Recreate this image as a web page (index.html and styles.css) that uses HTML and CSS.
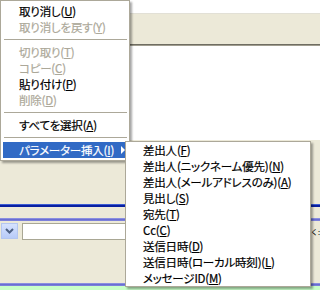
FILE: index.html
```html
<!DOCTYPE html>
<html lang="ja">
<head>
<meta charset="utf-8">
<link rel="stylesheet" href="styles.css">
</head>
<body>
<div class="window">
  <div class="top-white"></div>
  <div class="bar-hi"></div>
  <div class="bar"></div>
  <div class="bar-dark"></div>
  <div class="bar-gray"></div>
  <div class="white-mid"></div>
  <div class="beige-a"></div>
  <div class="blue-line"></div>
  <div class="beige-b"></div>
  <div class="lav-line"></div>
  <div class="tool-row">
    <div class="combo-btn">
      <svg width="9" height="6" viewBox="0 0 9 6"><path d="M1 1 L4.5 4.5 L8 1" fill="none" stroke="#4d6185" stroke-width="2"/></svg>
    </div>
    <div class="field"></div>
    <span class="field-label">く:</span>
  </div>
  <div class="beige-c"></div>
  <div class="lav-line"></div>
  <div class="green"></div>
</div>

<div class="menu main-menu">
  <div class="item">取り消し(<u>U</u>)</div>
  <div class="item disabled">取り消しを戻す(<u>Y</u>)</div>
  <div class="sep"></div>
  <div class="item disabled">切り取り(<u>T</u>)</div>
  <div class="item disabled">コピー(<u>C</u>)</div>
  <div class="item">貼り付け(<u>P</u>)</div>
  <div class="item disabled">削除(<u>D</u>)</div>
  <div class="sep"></div>
  <div class="item">すべてを選択(<u>A</u>)</div>
  <div class="sep"></div>
  <div class="item active">パラメーター挿入(<u>I</u>)<span class="arrow"></span></div>
</div>

<div class="menu sub-menu">
  <div class="item">差出人(<u>F</u>)</div>
  <div class="item">差出人(ニックネーム優先)(<u>N</u>)</div>
  <div class="item">差出人(メールアドレスのみ)(<u>A</u>)</div>
  <div class="item">見出し(<u>S</u>)</div>
  <div class="item">宛先(<u>T</u>)</div>
  <div class="item">Cc(<u>C</u>)</div>
  <div class="item">送信日時(<u>D</u>)</div>
  <div class="item">送信日時(ローカル時刻)(<u>L</u>)</div>
  <div class="item">メッセージID(<u>M</u>)</div>
</div>
</body>
</html>
```

FILE: styles.css
```css
html, body {
  margin: 0;
  padding: 0;
  width: 320px;
  height: 290px;
  overflow: hidden;
  background: #ece9d8;
}

body {
  font-family: "Noto Sans CJK JP", "Noto Sans", sans-serif;
  font-size: 11.5px;
  color: #000;
}

.window {
  width: 320px;
}

.top-white { height: 13px; background: #fff; }
.bar-hi { height: 1px; background: #e2e0d6; }
.bar { height: 30px; background: #ece9d8; }
.bar-dark { height: 1px; background: #6f6d62; }
.bar-gray { height: 1px; background: #a09d8f; }
.white-mid { height: 94px; background: #fff; }
.beige-a { height: 64px; background: #ece9d8; }
.blue-line {
  height: 3px;
  background: linear-gradient(#3c5cd2 0, #3c5cd2 1px, #0a20a0 1px, #0a20a0 3px);
}
.beige-b { height: 11px; background: #ece9d8; }
.lav-line {
  height: 3px;
  background: linear-gradient(#8a8ee0 0, #8a8ee0 1px, #6a6ed2 1px, #6a6ed2 2px, #7c80da 2px);
}
.tool-row {
  height: 20px;
  display: flex;
  align-items: flex-start;
  padding-top: 2px;
  box-sizing: border-box;
  background: #ece9d8;
}
.combo-btn {
  width: 15px;
  height: 14px;
  margin-left: 1px;
  border: 1px solid #b4c6f0;
  background: linear-gradient(#d6e2fe, #b8cbf8);
  display: flex;
  align-items: center;
  justify-content: center;
}
.field {
  flex: 1;
  height: 15px;
  margin-left: 4px;
  border: 1px solid #a9a794;
  background: #fff;
}
.field-label {
  margin-left: 1px;
  font-size: 7.5px;
  line-height: 17px;
  white-space: nowrap;
}
.beige-c { height: 42px; background: #ece9d8; }
.green { height: 10px; background: #c8ffc8; }

/* menus */
.menu {
  position: absolute;
  background: #fff;
  border: 1px solid #aca899;
  box-sizing: border-box;
  box-shadow: 2px 2px 2px rgba(0, 0, 0, 0.35);
}
.main-menu {
  left: 0;
  top: 0;
  width: 130px;
  padding: 2px 2px;
}
.sub-menu {
  left: 125px;
  top: 141px;
  width: 186px;
  height: 146px;
  padding: 0 2px;
}
.item {
  position: relative;
  height: 16px;
  line-height: 16px;
  white-space: nowrap;
  letter-spacing: -0.2px;
  font-feature-settings: "palt";
  -webkit-text-stroke: 0.2px currentColor;
}
.main-menu .item { padding-left: 16px; }
.sub-menu .item { padding-left: 15px; }
.item u {
  text-underline-offset: 1px;
}
.disabled { color: #aca899; }
.active {
  background: #316ac5;
  color: #fff;
}
.arrow {
  position: absolute;
  right: 2px;
  top: 4px;
  width: 0;
  height: 0;
  border-left: 4px solid #fff;
  border-top: 4px solid transparent;
  border-bottom: 4px solid transparent;
}
.sep {
  height: 9px;
  display: flex;
  align-items: center;
  padding-left: 1px;
}
.sep::before {
  content: "";
  display: block;
  width: 100%;
  height: 1px;
  background: #aca899;
}
```
